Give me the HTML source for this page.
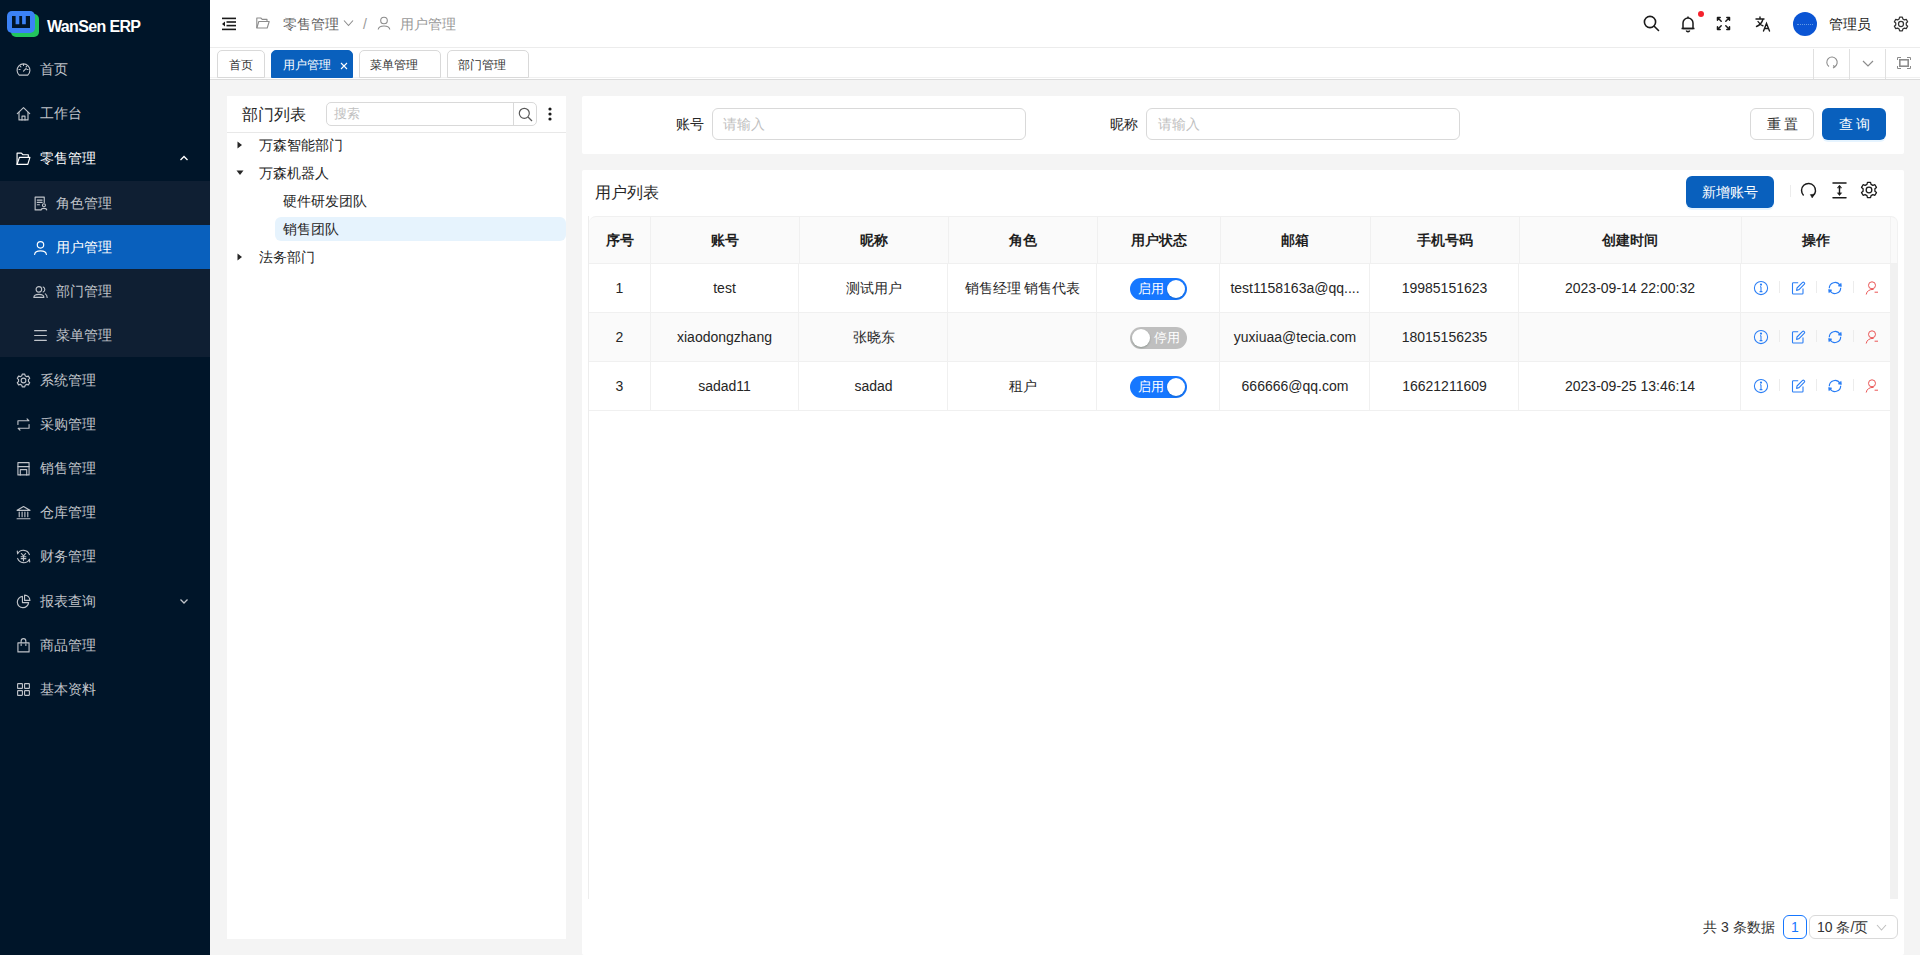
<!DOCTYPE html>
<html><head><meta charset="utf-8">
<style>
*{box-sizing:border-box;margin:0;padding:0}
html,body{width:1920px;height:955px;overflow:hidden;background:#f4f4f4;font-family:"Liberation Sans",sans-serif;font-size:14px;color:#333}
.abs{position:absolute}
svg{display:block}
#side{position:absolute;left:0;top:0;width:210px;height:955px;background:#001529}
#side .logo{position:absolute;left:0;top:0;width:210px;height:47px}
.mi{position:absolute;left:0;width:210px;height:44px;color:#c9ccd1;font-size:14px;line-height:44px}
.mi .ic{position:absolute;left:16px;top:14.5px}
.mi .tx{position:absolute;left:40px;top:0}
.mi.sub .ic{left:33px}
.mi.sub .tx{left:56px}
#sub{position:absolute;left:0;top:181px;width:210px;height:176px;background:#0f1f33}
#header{position:absolute;left:210px;top:0;width:1710px;height:48px;background:#fff;border-bottom:1px solid #ececec}
#tabs{position:absolute;left:210px;top:48px;width:1710px;height:32px;background:#fff;border-bottom:1px solid #dcdcdc}
.tab{position:absolute;top:2px;height:28px;border:1px solid #d9d9d9;border-radius:5px 5px 0 0;font-size:12px;line-height:28px;color:#333;background:#fff}
.panel{position:absolute;background:#fff}
</style></head><body>
<div id="side">
  <div class="logo">
    <div class="abs" style="left:11px;top:14px;width:28px;height:23px;background:#22c55e;border-radius:5px"></div>
    <div class="abs" style="left:7px;top:11px;width:28px;height:22px;background:#3b82f6;border-radius:5px"></div>
    <svg class="abs" style="left:7px;top:11px" width="28" height="22" viewBox="0 0 28 22"><path d="M5 5 H8.6 V13.2 H12.3 V5 H15.1 V13.2 H18.8 V5 H23 V17 H5 Z" fill="#001529"/></svg>
    <div class="abs" style="left:47px;top:17px;font-size:16px;letter-spacing:-0.65px;font-weight:bold;color:#fff;line-height:19px">WanSen ERP</div>
  </div>
  <div id="sub"></div>
  <div class="abs" style="left:0;top:225px;width:210px;height:44px;background:#0960bd"></div>
  <div class="mi" style="top:47px;color:#c0c4ca"><span class="ic"><svg width="15" height="15" viewBox="0 0 14 14" fill="none" stroke="#c0c4ca" stroke-width="1.05" stroke-linecap="round" stroke-linejoin="round"><path d="M3 12.2 A6 6 0 1 1 11 12.2 Z"/><path d="M7 8.5 L9.5 6"/><path d="M7 2.2v1M2.8 7h1M10.2 7h1M4 4l.6.6M10 4l-.6.6"/></svg></span><span class="tx">首页</span></div>
  <div class="mi" style="top:91px;color:#c0c4ca"><span class="ic"><svg width="15" height="15" viewBox="0 0 14 14" fill="none" stroke="#c0c4ca" stroke-width="1.05" stroke-linecap="round" stroke-linejoin="round"><path d="M1.2 7.2 L7 1.5 L12.8 7.2"/><path d="M2.8 5.8 V13 H11.2 V5.8"/><path d="M5.6 13 V9.5 H8.4 V13"/></svg></span><span class="tx">工作台</span></div>
  <div class="mi" style="top:136px;color:#ffffff"><span class="ic"><svg width="15" height="15" viewBox="0 0 14 14" fill="none" stroke="#ffffff" stroke-width="1.1" stroke-linecap="round" stroke-linejoin="round"><path d="M1 12.5 V2 H5 L6.5 3.5 H11.5 V6"/><path d="M1 12.5 L3.2 6 H13 L11 12.5 Z"/></svg></span><span class="tx">零售管理</span><svg class="abs" style="left:179px;top:18px" width="10" height="8" viewBox="0 0 10 8" fill="none" stroke="#ffffff" stroke-width="1.3"><path d="M1.5 6 L5 2.5 L8.5 6"/></svg></div>
  <div class="mi sub" style="top:181px;color:#c0c4ca"><span class="ic"><svg width="15" height="15" viewBox="0 0 14 14" fill="none" stroke="#c0c4ca" stroke-width="1.05" stroke-linecap="round" stroke-linejoin="round"><path d="M7 13 H2 V1 H10.5 V6"/><path d="M4 3.8h4.5M4 6h4.5M4 8.2h2"/><circle cx="10.2" cy="8.6" r="1.4"/><path d="M7.6 13 C7.8 11 12.6 11 12.8 13"/></svg></span><span class="tx">角色管理</span></div>
  <div class="mi sub" style="top:225px;color:#ffffff"><span class="ic"><svg width="15" height="15" viewBox="0 0 14 14" fill="none" stroke="#ffffff" stroke-width="1.1" stroke-linecap="round" stroke-linejoin="round"><circle cx="7" cy="4.5" r="3"/><path d="M1.5 13.5 C2 9 12 9 12.5 13.5"/></svg></span><span class="tx">用户管理</span></div>
  <div class="mi sub" style="top:269px;color:#c0c4ca"><span class="ic"><svg width="15" height="15" viewBox="0 0 14 14" fill="none" stroke="#c0c4ca" stroke-width="1.05" stroke-linecap="round" stroke-linejoin="round"><circle cx="5.5" cy="5" r="2.6"/><path d="M0.8 12.5 C1 8.8 10 8.8 10.2 12.5 Z"/><path d="M9.5 2.8 A2.5 2.5 0 0 1 9.5 7.4"/><path d="M11.5 9.2 C12.8 10 13.2 11 13.2 12.5"/></svg></span><span class="tx">部门管理</span></div>
  <div class="mi sub" style="top:313px;color:#c0c4ca"><span class="ic"><svg width="15" height="15" viewBox="0 0 14 14" fill="none" stroke="#c0c4ca" stroke-width="1.05" stroke-linecap="round" stroke-linejoin="round"><path d="M1.5 2.5h11M1.5 7h11M1.5 11.5h11"/></svg></span><span class="tx">菜单管理</span></div>
  <div class="mi" style="top:358px;color:#c0c4ca"><span class="ic"><svg width="15" height="15" viewBox="0 0 14 14" fill="none" stroke="#c0c4ca" stroke-width="1.05" stroke-linecap="round" stroke-linejoin="round"><path d="M5.8 1 H8.2 L8.6 2.6 L10 3.4 L11.6 2.9 L12.8 5 L11.6 6.1 V7.9 L12.8 9 L11.6 11.1 L10 10.6 L8.6 11.4 L8.2 13 H5.8 L5.4 11.4 L4 10.6 L2.4 11.1 L1.2 9 L2.4 7.9 V6.1 L1.2 5 L2.4 2.9 L4 3.4 L5.4 2.6 Z"/><circle cx="7" cy="7" r="2.2"/></svg></span><span class="tx">系统管理</span></div>
  <div class="mi" style="top:402px;color:#c0c4ca"><span class="ic"><svg width="15" height="15" viewBox="0 0 14 14" fill="none" stroke="#c0c4ca" stroke-width="1.05" stroke-linecap="round" stroke-linejoin="round"><path d="M1.8 7 V3.5 H12 L10.3 1.8"/><path d="M12.2 7 V10.5 H2 L3.7 12.2"/></svg></span><span class="tx">采购管理</span></div>
  <div class="mi" style="top:446px;color:#c0c4ca"><span class="ic"><svg width="15" height="15" viewBox="0 0 14 14" fill="none" stroke="#c0c4ca" stroke-width="1.05" stroke-linecap="round" stroke-linejoin="round"><path d="M1.8 1.5 H12.2 V13 H1.8 Z"/><path d="M1.8 5.2 H12.2"/><path d="M4 8 H10 M4 8 V13 M10 8 V13"/></svg></span><span class="tx">销售管理</span></div>
  <div class="mi" style="top:490px;color:#c0c4ca"><span class="ic"><svg width="15" height="15" viewBox="0 0 14 14" fill="none" stroke="#c0c4ca" stroke-width="1.05" stroke-linecap="round" stroke-linejoin="round"><path d="M1 5 L7 1.5 L13 5 Z"/><path d="M3 6.5 V11 M5.7 6.5 V11 M8.3 6.5 V11 M11 6.5 V11"/><path d="M1 12.8 H13"/></svg></span><span class="tx">仓库管理</span></div>
  <div class="mi" style="top:534px;color:#c0c4ca"><span class="ic"><svg width="15" height="15" viewBox="0 0 14 14" fill="none" stroke="#c0c4ca" stroke-width="1.05" stroke-linecap="round" stroke-linejoin="round"><path d="M12.5 5.2 A6 6 0 0 0 1.5 4.5 L1.2 2"/><path d="M1.5 8.8 A6 6 0 0 0 12.5 9.5 L12.8 12"/><path d="M5 4.2 L7 6.5 L9 4.2 M4.8 7.2h4.4M4.8 9h4.4M7 6.5V11"/></svg></span><span class="tx">财务管理</span></div>
  <div class="mi" style="top:579px;color:#c0c4ca"><span class="ic"><svg width="15" height="15" viewBox="0 0 14 14" fill="none" stroke="#c0c4ca" stroke-width="1.05" stroke-linecap="round" stroke-linejoin="round"><path d="M6 2.2 A5.3 5.3 0 1 0 11.8 8 H6 Z"/><path d="M8 1 A5 5 0 0 1 13 6 H8 Z"/></svg></span><span class="tx">报表查询</span><svg class="abs" style="left:179px;top:18px" width="10" height="8" viewBox="0 0 10 8" fill="none" stroke="#c0c4ca" stroke-width="1.3"><path d="M1.5 2.5 L5 6 L8.5 2.5"/></svg></div>
  <div class="mi" style="top:623px;color:#c0c4ca"><span class="ic"><svg width="15" height="15" viewBox="0 0 14 14" fill="none" stroke="#c0c4ca" stroke-width="1.05" stroke-linecap="round" stroke-linejoin="round"><path d="M1.8 4.5 H12.2 V13 H1.8 Z"/><path d="M4.8 4.5 V2.8 A2.2 2.2 0 0 1 9.2 2.8 V4.5"/><path d="M4.8 6 V7 M9.2 6 V7"/></svg></span><span class="tx">商品管理</span></div>
  <div class="mi" style="top:667px;color:#c0c4ca"><span class="ic"><svg width="15" height="15" viewBox="0 0 14 14" fill="none" stroke="#c0c4ca" stroke-width="1.05" stroke-linecap="round" stroke-linejoin="round"><rect x="1.5" y="1.5" width="4.5" height="4.5" rx=".5"/><rect x="8" y="1.5" width="4.5" height="4.5" rx=".5"/><rect x="1.5" y="8" width="4.5" height="4.5" rx=".5"/><rect x="8" y="8" width="4.5" height="4.5" rx=".5"/></svg></span><span class="tx">基本资料</span></div>
</div>
<div id="header">
  <svg class="abs" style="left:11px;top:17px" width="16" height="14" viewBox="0 0 16 14" fill="#1a1a1a"><rect x="1" y="0.6" width="14" height="1.6"/><rect x="5.5" y="4.2" width="9.5" height="1.6"/><rect x="5.5" y="7.8" width="9.5" height="1.6"/><rect x="1" y="11.6" width="14" height="1.6"/><path d="M1 7 L4 4.6 V9.4 Z"/></svg>
  <svg class="abs" style="left:46px;top:17px" width="14" height="12" viewBox="0 0 14 12" fill="none" stroke="#8c8c8c" stroke-width="1.1" stroke-linejoin="round"><path d="M0.8 11 V1 H4.8 L6.2 2.4 H11 V4.5"/><path d="M0.8 11 L2.8 4.5 H13.2 L11.2 11 Z"/></svg>
  <div class="abs" style="left:73px;top:16px;color:#5f5f5f;font-size:14px;line-height:17px">零售管理</div>
  <svg class="abs" style="left:133px;top:19px" width="11" height="8" viewBox="0 0 11 8" fill="none" stroke="#8c8c8c" stroke-width="1.1"><path d="M1 1.5 L5.5 6.5 L10 1.5"/></svg>
  <div class="abs" style="left:153px;top:16px;color:#999;font-size:14px;line-height:17px">/</div>
  <svg class="abs" style="left:167px;top:16px" width="14" height="14" viewBox="0 0 14 14" fill="none" stroke="#8c8c8c" stroke-width="1.1"><circle cx="7" cy="4.5" r="3.3"/><path d="M1.2 13.5 C1.8 8.8 12.2 8.8 12.8 13.5"/></svg>
  <div class="abs" style="left:190px;top:16px;color:#999;font-size:14px;line-height:17px">用户管理</div>
  <svg class="abs" style="left:1433px;top:15px" width="17" height="17" viewBox="0 0 17 17" fill="none" stroke="#1a1a1a" stroke-width="1.6"><circle cx="7" cy="7" r="5.6"/><path d="M11.2 11.2 L15.5 15.5" stroke-linecap="round"/></svg>
  <svg class="abs" style="left:1470px;top:15px" width="16" height="18" viewBox="0 0 16 18" fill="none" stroke="#1a1a1a" stroke-width="1.5" stroke-linejoin="round"><path d="M3 13.5 V8 A5 5 0 0 1 13 8 V13.5 Z"/><path d="M1.5 13.5 H14.5"/><path d="M6.3 15.5 A1.8 1.8 0 0 0 9.7 15.5" /><path d="M8 1.5 V3"/></svg>
  <div class="abs" style="left:1488px;top:11px;width:6px;height:6px;border-radius:50%;background:#f5222d"></div>
  <svg class="abs" style="left:1506px;top:16px" width="15" height="15" viewBox="0 0 15 15" fill="none" stroke="#1a1a1a" stroke-width="1.5" stroke-linecap="round"><path d="M1.5 1.5 L5.2 5.2 M1.5 1.5 V4.2 M1.5 1.5 H4.2"/><path d="M13.5 1.5 L9.8 5.2 M13.5 1.5 V4.2 M13.5 1.5 H10.8"/><path d="M1.5 13.5 L5.2 9.8 M1.5 13.5 V10.8 M1.5 13.5 H4.2"/><path d="M13.5 13.5 L9.8 9.8 M13.5 13.5 V10.8 M13.5 13.5 H10.8"/></svg>
  <svg class="abs" style="left:1545px;top:16px" width="16" height="16" viewBox="0 0 16 16" fill="none" stroke="#1a1a1a" stroke-width="1.4" stroke-linecap="round"><path d="M1 3 H9 M5 1 V3 M8 3 C7 7 4 9.5 1.5 10.5 M3 5.5 C4.5 8 6 9 8 9.8"/><path d="M8.5 15 L11.5 7.5 L14.5 15 M9.6 12.5 H13.4"/></svg>
  <div class="abs" style="left:1583px;top:12px;width:24px;height:24px;border-radius:50%;background:#0b55d4"><div class="abs" style="left:4px;top:12px;width:16px;height:1.5px;border-top:1.5px dotted #9ec8f0;opacity:.6"></div></div>
  <div class="abs" style="left:1619px;top:16px;color:#1a1a1a;font-size:14px;line-height:17px">管理员</div>
  <svg class="abs" style="left:1683px;top:16px" width="16" height="16" viewBox="0 0 14 14" fill="none" stroke="#333" stroke-width="1.1" stroke-linejoin="round"><path d="M5.8 1 H8.2 L8.6 2.6 L10 3.4 L11.6 2.9 L12.8 5 L11.6 6.1 V7.9 L12.8 9 L11.6 11.1 L10 10.6 L8.6 11.4 L8.2 13 H5.8 L5.4 11.4 L4 10.6 L2.4 11.1 L1.2 9 L2.4 7.9 V6.1 L1.2 5 L2.4 2.9 L4 3.4 L5.4 2.6 Z"/><circle cx="7" cy="7" r="2.2"/></svg>
</div>
<div id="tabs">
  <div class="abs" style="left:0;top:29px;width:1710px;height:1px;background:#f0f0f0"></div>
  <div class="tab" style="left:7px;width:48px;text-align:center">首页</div>
  <div class="tab" style="left:61px;width:82px;background:#0960bd;border-color:#0960bd;color:#fff;padding-left:11px">用户管理<svg class="abs" style="left:68px;top:11px" width="8" height="8" viewBox="0 0 8 8" stroke="#fff" stroke-width="1.1"><path d="M1 1 L7 7 M7 1 L1 7"/></svg></div>
  <div class="tab" style="left:149px;width:82px;padding-left:10px">菜单管理</div>
  <div class="tab" style="left:237px;width:82px;padding-left:10px">部门管理</div>
  <div class="abs" style="left:1603px;top:1px;width:1px;height:30px;background:#e0e0e0"></div>
  <div class="abs" style="left:1639px;top:1px;width:1px;height:30px;background:#e0e0e0"></div>
  <div class="abs" style="left:1675px;top:1px;width:1px;height:30px;background:#e0e0e0"></div>
  <svg class="abs" style="left:1615px;top:7px" width="14" height="14" viewBox="0 0 14 14" fill="none" stroke="#8c8c8c" stroke-width="1.1"><path d="M9.5 11.8 A5.2 5.2 0 1 0 4 11.5"/><path d="M8.2 10.5 L9.8 12 L8 13"/></svg>
  <svg class="abs" style="left:1652px;top:11px" width="12" height="9" viewBox="0 0 12 9" fill="none" stroke="#8c8c8c" stroke-width="1.2"><path d="M1 2 L6 7 L11 2"/></svg>
  <svg class="abs" style="left:1687px;top:9px" width="14" height="13" viewBox="0 0 14 13" fill="none" stroke="#8c8c8c" stroke-width="1"><path d="M0.5 3 V0.5 H4 M10 0.5 H13.5 V3 M13.5 9 V11.5 H10 M4 11.5 H0.5 V9"/><rect x="2.8" y="2.8" width="8.4" height="6.4" stroke-width="1.6"/></svg>
</div>
<div class="panel" style="left:227px;top:96px;width:339px;height:843px">
  <div class="abs" style="left:15px;top:9px;font-size:16px;line-height:20px;color:#262626">部门列表</div>
  <div class="abs" style="left:99px;top:6px;width:211px;height:24px;border:1px solid #d9d9d9;border-radius:5px"></div>
  <div class="abs" style="left:107px;top:10px;font-size:13px;line-height:16px;color:#bfbfbf">搜索</div>
  <div class="abs" style="left:286px;top:6px;width:1px;height:24px;background:#d9d9d9"></div>
  <svg class="abs" style="left:291px;top:11px" width="15" height="15" viewBox="0 0 15 15" fill="none" stroke="#595959" stroke-width="1.2"><circle cx="6.3" cy="6.3" r="5"/><path d="M10 10 L14 14"/></svg>
  <svg class="abs" style="left:320px;top:11px" width="6" height="14" viewBox="0 0 6 14" fill="#1a1a1a"><circle cx="3" cy="2" r="1.6"/><circle cx="3" cy="7" r="1.6"/><circle cx="3" cy="12" r="1.6"/></svg>
  <div class="abs" style="left:0;top:36px;width:339px;height:1px;background:#e8e8e8"></div>
  <svg class="abs" style="left:10px;top:45px" width="6" height="8" viewBox="0 0 6 8" fill="#262626"><path d="M0.5 0.5 L5 4 L0.5 7.5 Z"/></svg>
  <div class="abs" style="left:32px;top:41px;line-height:17px;color:#262626">万森智能部门</div>
  <svg class="abs" style="left:9px;top:74px" width="8" height="6" viewBox="0 0 8 6" fill="#262626"><path d="M0.5 0.5 L7.5 0.5 L4 5 Z"/></svg>
  <div class="abs" style="left:32px;top:69px;line-height:17px;color:#262626">万森机器人</div>
  <div class="abs" style="left:56px;top:97px;line-height:17px;color:#262626">硬件研发团队</div>
  <div class="abs" style="left:48px;top:121px;width:291px;height:24px;border-radius:6px;background:#e6f3fd"></div>
  <div class="abs" style="left:56px;top:125px;line-height:17px;color:#262626">销售团队</div>
  <svg class="abs" style="left:10px;top:157px" width="6" height="8" viewBox="0 0 6 8" fill="#262626"><path d="M0.5 0.5 L5 4 L0.5 7.5 Z"/></svg>
  <div class="abs" style="left:32px;top:153px;line-height:17px;color:#262626">法务部门</div>
</div>
<div class="panel" style="left:582px;top:96px;width:1322px;height:58px;border-radius:2px">
  <div class="abs" style="left:94px;top:20px;line-height:17px;color:#262626">账号</div>
  <div class="abs" style="left:130px;top:12px;width:314px;height:32px;border:1px solid #d9d9d9;border-radius:6px"></div>
  <div class="abs" style="left:141px;top:20px;line-height:17px;color:#bfbfbf">请输入</div>
  <div class="abs" style="left:528px;top:20px;line-height:17px;color:#262626">昵称</div>
  <div class="abs" style="left:564px;top:12px;width:314px;height:32px;border:1px solid #d9d9d9;border-radius:6px"></div>
  <div class="abs" style="left:576px;top:20px;line-height:17px;color:#bfbfbf">请输入</div>
  <div class="abs" style="left:1168px;top:12px;width:64px;height:32px;border:1px solid #d9d9d9;border-radius:6px;text-align:center;line-height:30px;color:#333;letter-spacing:3px;padding-left:3px">重置</div>
  <div class="abs" style="left:1240px;top:12px;width:64px;height:32px;background:#0960bd;border-radius:6px;text-align:center;line-height:32px;color:#fff;letter-spacing:3px;padding-left:3px;box-shadow:0 2px 0 rgba(5,145,255,.1)">查询</div>
</div>
<div class="panel" id="tp" style="left:582px;top:170px;width:1322px;height:785px;border-radius:2px">
  <div class="abs" style="left:13px;top:13px;font-size:16px;line-height:20px;color:#262626">用户列表</div>
  <div class="abs" style="left:1104px;top:6px;width:88px;height:32px;background:#0960bd;border-radius:6px;text-align:center;line-height:32px;color:#fff;box-shadow:0 2px 0 rgba(5,145,255,.1)">新增账号</div>
  <div class="abs" style="left:1208px;top:15px;width:1px;height:12px;background:#ececec"></div>
  <svg class="abs" style="left:1218px;top:12px" width="17" height="17" viewBox="0 0 17 17" fill="none" stroke="#1a1a1a" stroke-width="1.45"><path d="M3.6 13.4 A7 7 0 1 1 12.9 13.9"/><path d="M10.3 12.6 L14.2 12.2 L12.2 15.9 Z" fill="#1a1a1a" stroke-width=".5"/></svg>
  <svg class="abs" style="left:1250px;top:12px" width="15" height="17" viewBox="0 0 15 17" fill="none" stroke="#1a1a1a" stroke-width="1.5" stroke-linecap="round"><path d="M1 1 H14 M1 15.7 H14"/><path d="M7.5 4.5 V12.2" stroke-width="1.4"/><path d="M5.6 5.6 L7.5 3.2 L9.4 5.6 Z M5.6 11.1 L7.5 13.5 L9.4 11.1 Z" fill="#1a1a1a" stroke-width=".6"/></svg>
  <svg class="abs" style="left:1278px;top:11px" width="18" height="18" viewBox="0 0 14 14" fill="none" stroke="#1a1a1a" stroke-width="1.0" stroke-linejoin="round"><path d="M5.8 1 H8.2 L8.6 2.6 L10 3.4 L11.6 2.9 L12.8 5 L11.6 6.1 V7.9 L12.8 9 L11.6 11.1 L10 10.6 L8.6 11.4 L8.2 13 H5.8 L5.4 11.4 L4 10.6 L2.4 11.1 L1.2 9 L2.4 7.9 V6.1 L1.2 5 L2.4 2.9 L4 3.4 L5.4 2.6 Z"/><circle cx="7" cy="7" r="2.2"/></svg>
  <!--T--><div class="abs" style="left:7px;top:46px;width:1309px;height:47px;background:#fafafa;border-top:1px solid #f0f0f0;border-right:1px solid #f2f2f2;border-radius:7px 7px 0 0"></div>
  <div class="abs" style="left:7px;top:142px;width:1301px;height:49px;background:#fafafa"></div>
  <div class="abs" style="left:1308px;top:93px;width:8px;height:636px;background:#f1f1f1"></div>
  <div class="abs" style="left:7px;top:93px;width:1308px;height:1px;background:#f0f0f0"></div>
  <div class="abs" style="left:7px;top:142px;width:1301px;height:1px;background:#f0f0f0"></div>
  <div class="abs" style="left:7px;top:191px;width:1301px;height:1px;background:#f0f0f0"></div>
  <div class="abs" style="left:7px;top:240px;width:1301px;height:1px;background:#f0f0f0"></div>
  <div class="abs" style="left:6px;top:46px;width:1px;height:683px;background:#ededed"></div>
  <div class="abs" style="left:1308px;top:47px;width:1px;height:46px;background:#f2f2f2"></div>
  <div class="abs" style="left:68px;top:46px;width:1px;height:47px;background:#f0f0f0"></div>
  <div class="abs" style="left:68px;top:93px;width:1px;height:147px;background:#f0f0f0"></div>
  <div class="abs" style="left:217px;top:46px;width:1px;height:47px;background:#f0f0f0"></div>
  <div class="abs" style="left:216px;top:93px;width:1px;height:147px;background:#f0f0f0"></div>
  <div class="abs" style="left:366px;top:46px;width:1px;height:47px;background:#f0f0f0"></div>
  <div class="abs" style="left:365px;top:93px;width:1px;height:147px;background:#f0f0f0"></div>
  <div class="abs" style="left:515px;top:46px;width:1px;height:47px;background:#f0f0f0"></div>
  <div class="abs" style="left:514px;top:93px;width:1px;height:147px;background:#f0f0f0"></div>
  <div class="abs" style="left:638px;top:46px;width:1px;height:47px;background:#f0f0f0"></div>
  <div class="abs" style="left:637px;top:93px;width:1px;height:147px;background:#f0f0f0"></div>
  <div class="abs" style="left:788px;top:46px;width:1px;height:47px;background:#f0f0f0"></div>
  <div class="abs" style="left:787px;top:93px;width:1px;height:147px;background:#f0f0f0"></div>
  <div class="abs" style="left:937px;top:46px;width:1px;height:47px;background:#f0f0f0"></div>
  <div class="abs" style="left:936px;top:93px;width:1px;height:147px;background:#f0f0f0"></div>
  <div class="abs" style="left:1159px;top:46px;width:1px;height:47px;background:#f0f0f0"></div>
  <div class="abs" style="left:1158px;top:93px;width:1px;height:147px;background:#f0f0f0"></div>
  <div class="abs" style="left:7px;top:62px;width:61px;text-align:center;font-weight:bold;line-height:17px;color:#1f1f1f">序号</div>
  <div class="abs" style="left:68px;top:62px;width:149px;text-align:center;font-weight:bold;line-height:17px;color:#1f1f1f">账号</div>
  <div class="abs" style="left:217px;top:62px;width:149px;text-align:center;font-weight:bold;line-height:17px;color:#1f1f1f">昵称</div>
  <div class="abs" style="left:366px;top:62px;width:149px;text-align:center;font-weight:bold;line-height:17px;color:#1f1f1f">角色</div>
  <div class="abs" style="left:515px;top:62px;width:123px;text-align:center;font-weight:bold;line-height:17px;color:#1f1f1f">用户状态</div>
  <div class="abs" style="left:638px;top:62px;width:150px;text-align:center;font-weight:bold;line-height:17px;color:#1f1f1f">邮箱</div>
  <div class="abs" style="left:788px;top:62px;width:149px;text-align:center;font-weight:bold;line-height:17px;color:#1f1f1f">手机号码</div>
  <div class="abs" style="left:937px;top:62px;width:222px;text-align:center;font-weight:bold;line-height:17px;color:#1f1f1f">创建时间</div>
  <div class="abs" style="left:1159px;top:62px;width:149px;text-align:center;font-weight:bold;line-height:17px;color:#1f1f1f">操作</div>
  <div class="abs" style="left:7px;top:110px;width:61px;text-align:center;line-height:17px;color:#262626;white-space:nowrap">1</div>
  <div class="abs" style="left:68px;top:110px;width:149px;text-align:center;line-height:17px;color:#262626;white-space:nowrap">test</div>
  <div class="abs" style="left:217px;top:110px;width:149px;text-align:center;line-height:17px;color:#262626;white-space:nowrap">测试用户</div>
  <div class="abs" style="left:366px;top:110px;width:149px;text-align:center;line-height:17px;color:#262626;white-space:nowrap">销售经理 销售代表</div>
  <div class="abs" style="left:548px;top:107.5px;width:57px;height:22px;border-radius:11px;background:#1677ff"><div class="abs" style="left:8px;top:4.5px;font-size:12.5px;line-height:15px;color:#fff">启用</div><div class="abs" style="left:37px;top:2px;width:18px;height:18px;border-radius:50%;background:#fff;box-shadow:0 1px 2px rgba(0,35,11,.2)"></div></div>
  <div class="abs" style="left:638px;top:110px;width:150px;text-align:center;line-height:17px;color:#262626;white-space:nowrap">test1158163a@qq....</div>
  <div class="abs" style="left:788px;top:110px;width:149px;text-align:center;line-height:17px;color:#262626;white-space:nowrap">19985151623</div>
  <div class="abs" style="left:937px;top:110px;width:222px;text-align:center;line-height:17px;color:#262626;white-space:nowrap">2023-09-14 22:00:32</div>
  <svg class="abs" style="left:1171px;top:109.5px" width="16" height="16" viewBox="0 0 16 16" fill="none" stroke="#2a7ef5" stroke-width="1.05"><circle cx="8" cy="8" r="6.6"/><path d="M8 6.8 V11.6 M6.6 11.6 H9.4 M7 6.8 H8" /><circle cx="8" cy="4.6" r=".6" fill="#2a7ef5"/></svg><div class="abs" style="left:1197px;top:110.5px;width:1px;height:12px;background:#ececec"></div><svg class="abs" style="left:1208px;top:109.5px" width="16" height="16" viewBox="0 0 16 16" fill="none" stroke="#2a7ef5" stroke-width="1.1" stroke-linejoin="round"><path d="M8.2 2.8 H3.3 A.8 .8 0 0 0 2.5 3.6 V13.2 A.8 .8 0 0 0 3.3 14 H12.2 A.8 .8 0 0 0 13 13.2 V8.5"/><path d="M6.6 10.4 L7 8 L12.6 2.4 A.9 .9 0 0 1 13.9 2.4 L14.4 2.9 A.9 .9 0 0 1 14.4 4.2 L8.8 9.8 Z"/></svg><div class="abs" style="left:1234px;top:110.5px;width:1px;height:12px;background:#ececec"></div><svg class="abs" style="left:1245px;top:109.5px" width="16" height="16" viewBox="0 0 16 16" fill="none" stroke="#2a7ef5" stroke-width="1.2"><path d="M2.3 8.2 A5.7 5.7 0 0 1 12.9 5.3"/><path d="M13.7 7.8 A5.7 5.7 0 0 1 3.1 10.7"/><path d="M11.2 5.9 L14.4 6.5 L14.1 3.3 Z" fill="#2a7ef5" stroke-width=".6"/><path d="M4.8 10.1 L1.6 9.5 L1.9 12.7 Z" fill="#2a7ef5" stroke-width=".6"/></svg><div class="abs" style="left:1271px;top:110.5px;width:1px;height:12px;background:#ececec"></div><svg class="abs" style="left:1282px;top:109.5px" width="16" height="16" viewBox="0 0 16 16" fill="none" stroke="#ea5555" stroke-width="1.0"><circle cx="8" cy="5.3" r="3.5"/><path d="M2.2 14.5 C2.8 11 5.5 9.2 9.6 9.4"/><path d="M10.6 12.2 H14"/></svg>
  <div class="abs" style="left:7px;top:159px;width:61px;text-align:center;line-height:17px;color:#262626;white-space:nowrap">2</div>
  <div class="abs" style="left:68px;top:159px;width:149px;text-align:center;line-height:17px;color:#262626;white-space:nowrap">xiaodongzhang</div>
  <div class="abs" style="left:217px;top:159px;width:149px;text-align:center;line-height:17px;color:#262626;white-space:nowrap">张晓东</div>
  <div class="abs" style="left:548px;top:156.5px;width:57px;height:22px;border-radius:11px;background:#bfbfbf"><div class="abs" style="left:24px;top:4.5px;font-size:12.5px;line-height:15px;color:#fff">停用</div><div class="abs" style="left:2px;top:2px;width:18px;height:18px;border-radius:50%;background:#fff;box-shadow:0 1px 2px rgba(0,35,11,.25)"></div></div>
  <div class="abs" style="left:638px;top:159px;width:150px;text-align:center;line-height:17px;color:#262626;white-space:nowrap">yuxiuaa@tecia.com</div>
  <div class="abs" style="left:788px;top:159px;width:149px;text-align:center;line-height:17px;color:#262626;white-space:nowrap">18015156235</div>
  <svg class="abs" style="left:1171px;top:158.5px" width="16" height="16" viewBox="0 0 16 16" fill="none" stroke="#2a7ef5" stroke-width="1.05"><circle cx="8" cy="8" r="6.6"/><path d="M8 6.8 V11.6 M6.6 11.6 H9.4 M7 6.8 H8" /><circle cx="8" cy="4.6" r=".6" fill="#2a7ef5"/></svg><div class="abs" style="left:1197px;top:159.5px;width:1px;height:12px;background:#ececec"></div><svg class="abs" style="left:1208px;top:158.5px" width="16" height="16" viewBox="0 0 16 16" fill="none" stroke="#2a7ef5" stroke-width="1.1" stroke-linejoin="round"><path d="M8.2 2.8 H3.3 A.8 .8 0 0 0 2.5 3.6 V13.2 A.8 .8 0 0 0 3.3 14 H12.2 A.8 .8 0 0 0 13 13.2 V8.5"/><path d="M6.6 10.4 L7 8 L12.6 2.4 A.9 .9 0 0 1 13.9 2.4 L14.4 2.9 A.9 .9 0 0 1 14.4 4.2 L8.8 9.8 Z"/></svg><div class="abs" style="left:1234px;top:159.5px;width:1px;height:12px;background:#ececec"></div><svg class="abs" style="left:1245px;top:158.5px" width="16" height="16" viewBox="0 0 16 16" fill="none" stroke="#2a7ef5" stroke-width="1.2"><path d="M2.3 8.2 A5.7 5.7 0 0 1 12.9 5.3"/><path d="M13.7 7.8 A5.7 5.7 0 0 1 3.1 10.7"/><path d="M11.2 5.9 L14.4 6.5 L14.1 3.3 Z" fill="#2a7ef5" stroke-width=".6"/><path d="M4.8 10.1 L1.6 9.5 L1.9 12.7 Z" fill="#2a7ef5" stroke-width=".6"/></svg><div class="abs" style="left:1271px;top:159.5px;width:1px;height:12px;background:#ececec"></div><svg class="abs" style="left:1282px;top:158.5px" width="16" height="16" viewBox="0 0 16 16" fill="none" stroke="#ea5555" stroke-width="1.0"><circle cx="8" cy="5.3" r="3.5"/><path d="M2.2 14.5 C2.8 11 5.5 9.2 9.6 9.4"/><path d="M10.6 12.2 H14"/></svg>
  <div class="abs" style="left:7px;top:208px;width:61px;text-align:center;line-height:17px;color:#262626;white-space:nowrap">3</div>
  <div class="abs" style="left:68px;top:208px;width:149px;text-align:center;line-height:17px;color:#262626;white-space:nowrap">sadad11</div>
  <div class="abs" style="left:217px;top:208px;width:149px;text-align:center;line-height:17px;color:#262626;white-space:nowrap">sadad</div>
  <div class="abs" style="left:366px;top:208px;width:149px;text-align:center;line-height:17px;color:#262626;white-space:nowrap">租户</div>
  <div class="abs" style="left:548px;top:205.5px;width:57px;height:22px;border-radius:11px;background:#1677ff"><div class="abs" style="left:8px;top:4.5px;font-size:12.5px;line-height:15px;color:#fff">启用</div><div class="abs" style="left:37px;top:2px;width:18px;height:18px;border-radius:50%;background:#fff;box-shadow:0 1px 2px rgba(0,35,11,.2)"></div></div>
  <div class="abs" style="left:638px;top:208px;width:150px;text-align:center;line-height:17px;color:#262626;white-space:nowrap">666666@qq.com</div>
  <div class="abs" style="left:788px;top:208px;width:149px;text-align:center;line-height:17px;color:#262626;white-space:nowrap">16621211609</div>
  <div class="abs" style="left:937px;top:208px;width:222px;text-align:center;line-height:17px;color:#262626;white-space:nowrap">2023-09-25 13:46:14</div>
  <svg class="abs" style="left:1171px;top:207.5px" width="16" height="16" viewBox="0 0 16 16" fill="none" stroke="#2a7ef5" stroke-width="1.05"><circle cx="8" cy="8" r="6.6"/><path d="M8 6.8 V11.6 M6.6 11.6 H9.4 M7 6.8 H8" /><circle cx="8" cy="4.6" r=".6" fill="#2a7ef5"/></svg><div class="abs" style="left:1197px;top:208.5px;width:1px;height:12px;background:#ececec"></div><svg class="abs" style="left:1208px;top:207.5px" width="16" height="16" viewBox="0 0 16 16" fill="none" stroke="#2a7ef5" stroke-width="1.1" stroke-linejoin="round"><path d="M8.2 2.8 H3.3 A.8 .8 0 0 0 2.5 3.6 V13.2 A.8 .8 0 0 0 3.3 14 H12.2 A.8 .8 0 0 0 13 13.2 V8.5"/><path d="M6.6 10.4 L7 8 L12.6 2.4 A.9 .9 0 0 1 13.9 2.4 L14.4 2.9 A.9 .9 0 0 1 14.4 4.2 L8.8 9.8 Z"/></svg><div class="abs" style="left:1234px;top:208.5px;width:1px;height:12px;background:#ececec"></div><svg class="abs" style="left:1245px;top:207.5px" width="16" height="16" viewBox="0 0 16 16" fill="none" stroke="#2a7ef5" stroke-width="1.2"><path d="M2.3 8.2 A5.7 5.7 0 0 1 12.9 5.3"/><path d="M13.7 7.8 A5.7 5.7 0 0 1 3.1 10.7"/><path d="M11.2 5.9 L14.4 6.5 L14.1 3.3 Z" fill="#2a7ef5" stroke-width=".6"/><path d="M4.8 10.1 L1.6 9.5 L1.9 12.7 Z" fill="#2a7ef5" stroke-width=".6"/></svg><div class="abs" style="left:1271px;top:208.5px;width:1px;height:12px;background:#ececec"></div><svg class="abs" style="left:1282px;top:207.5px" width="16" height="16" viewBox="0 0 16 16" fill="none" stroke="#ea5555" stroke-width="1.0"><circle cx="8" cy="5.3" r="3.5"/><path d="M2.2 14.5 C2.8 11 5.5 9.2 9.6 9.4"/><path d="M10.6 12.2 H14"/></svg><!--/T-->
  <div class="abs" style="left:1121px;top:749px;line-height:17px;color:#333">共 3 条数据</div>
  <div class="abs" style="left:1201px;top:745px;width:24px;height:24px;border:1px solid #1677ff;border-radius:6px;text-align:center;line-height:22px;color:#1677ff">1</div>
  <div class="abs" style="left:1227px;top:745px;width:89px;height:24px;border:1px solid #d9d9d9;border-radius:6px"></div>
  <div class="abs" style="left:1235px;top:749px;line-height:17px;color:#333">10 条/页</div>
  <svg class="abs" style="left:1294px;top:754px" width="11" height="7" viewBox="0 0 11 7" fill="none" stroke="#bfbfbf" stroke-width="1.1"><path d="M1 1 L5.5 6 L10 1"/></svg>
</div>
</body></html>
